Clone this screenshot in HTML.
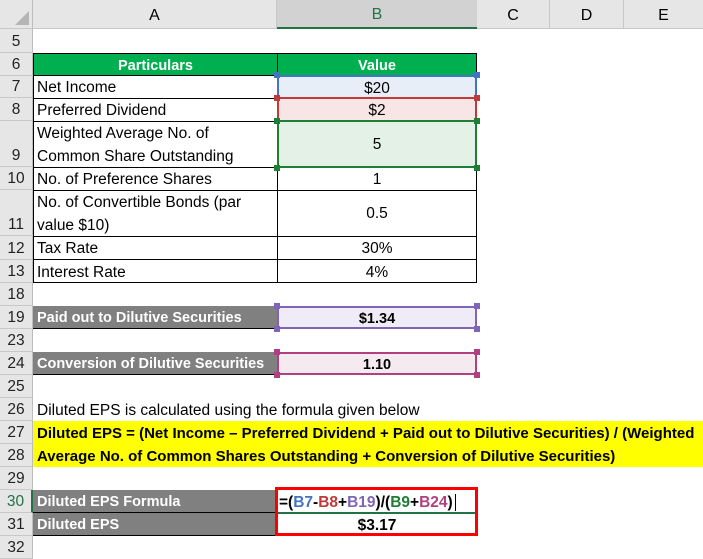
<!DOCTYPE html>
<html><head><meta charset="utf-8"><style>
*{margin:0;padding:0;box-sizing:border-box}
body{width:703px;height:556px;overflow:hidden;background:#fff;font-family:"Liberation Sans",sans-serif;font-size:15.5px;color:#000;position:relative}
.a{position:absolute}
.rh{position:absolute;left:0;width:33px;background:#e6e6e6;border-bottom:1px solid #c8c8c8;border-right:1px solid #bdbdbd;color:#222;font-size:15.5px;text-align:center;display:flex;align-items:flex-end;justify-content:center;padding-bottom:1px}
.c{position:absolute;display:flex;align-items:center;white-space:nowrap;overflow:visible;padding-top:2px}
.ctr{justify-content:center}
.b{font-weight:bold}
.g{font-size:14.5px}
.h{width:6px;height:6px;position:absolute}
</style></head><body>
<div class="a" style="left:0;top:0;width:703px;height:29px;background:#e6e6e6;border-bottom:1px solid #c8c8c8"></div>
<div class="a" style="left:0;top:0;width:33px;height:29px;border-right:1px solid #bdbdbd"></div>
<svg class="a" style="left:14px;top:10px" width="16" height="16"><polygon points="15,1 15,15 1,15" fill="#b5b5b5"/></svg>
<div class="c ctr" style="left:33px;top:0;width:244px;height:29px;border-right:1px solid #c8c8c8;font-size:16px">A</div>
<div class="c ctr" style="left:277px;top:0;width:200px;height:29px;background:#d2d2d2;border-bottom:2px solid #217346;color:#217346;font-size:16px">B</div>
<div class="c ctr" style="left:477px;top:0;width:73px;height:29px;border-right:1px solid #c8c8c8;font-size:16px">C</div>
<div class="c ctr" style="left:550px;top:0;width:74px;height:29px;border-right:1px solid #c8c8c8;font-size:16px">D</div>
<div class="c ctr" style="left:624px;top:0;width:79px;height:29px;font-size:16px">E</div>

<div class="rh" style="top:29px;height:24px">5</div>
<div class="rh" style="top:53px;height:23px">6</div>
<div class="rh" style="top:76px;height:22px">7</div>
<div class="rh" style="top:98px;height:23px">8</div>
<div class="rh" style="top:121px;height:46px">9</div>
<div class="rh" style="top:167px;height:23px">10</div>
<div class="rh" style="top:190px;height:46px">11</div>
<div class="rh" style="top:236px;height:24px">12</div>
<div class="rh" style="top:260px;height:23px">13</div>
<div class="rh" style="top:283px;height:23px">18</div>
<div class="rh" style="top:306px;height:23px">19</div>
<div class="rh" style="top:329px;height:23px">23</div>
<div class="rh" style="top:352px;height:23px">24</div>
<div class="rh" style="top:375px;height:23px">25</div>
<div class="rh" style="top:398px;height:23px">26</div>
<div class="rh" style="top:421px;height:23px">27</div>
<div class="rh" style="top:444px;height:23px">28</div>
<div class="rh" style="top:467px;height:23px">29</div>
<div class="rh" style="top:490px;height:23px;color:#217346;border-right:2px solid #217346">30</div>
<div class="rh" style="top:513px;height:23px">31</div>
<div class="rh" style="top:536px;height:23px">32</div>

<div class="c ctr b g" style="left:33px;top:53px;width:244px;height:23px;background:#00b050;color:#fff;border:1px solid #000;border-right:none">Particulars</div>
<div class="c ctr b g" style="left:277px;top:53px;width:200px;height:23px;background:#00b050;color:#fff;border:1px solid #000">Value</div>

<div class="a" style="left:33px;top:75px;width:444px;height:208px;border:1px solid #000;border-top:none"></div>
<div class="a" style="left:277px;top:75px;width:1px;height:208px;background:#000"></div>
<div class="a" style="left:33px;top:98px;width:244px;height:1px;background:#000"></div>
<div class="a" style="left:33px;top:121px;width:244px;height:1px;background:#000"></div>
<div class="a" style="left:33px;top:167px;width:444px;height:1px;background:#000"></div>
<div class="a" style="left:33px;top:190px;width:444px;height:1px;background:#000"></div>
<div class="a" style="left:33px;top:236px;width:444px;height:1px;background:#000"></div>
<div class="a" style="left:33px;top:259px;width:444px;height:1px;background:#000"></div>

<div class="c" style="left:37px;top:76px;height:22px">Net Income</div>
<div class="c" style="left:37px;top:98px;height:23px">Preferred Dividend</div>
<div class="c" style="left:37px;top:121px;height:23px">Weighted Average No. of</div>
<div class="c" style="left:37px;top:144px;height:23px">Common Share Outstanding</div>
<div class="c" style="left:37px;top:167px;height:23px">No. of Preference Shares</div>
<div class="c" style="left:37px;top:190px;height:23px">No. of Convertible Bonds (par</div>
<div class="c" style="left:37px;top:213px;height:23px">value $10)</div>
<div class="c" style="left:37px;top:236px;height:24px">Tax Rate</div>
<div class="c" style="left:37px;top:260px;height:23px">Interest Rate</div>

<div class="c ctr" style="left:277px;top:75px;width:200px;height:23px;background:#e8eef8;border:2px solid #4472c4;border-bottom:none">$20</div>
<div class="c ctr" style="left:277px;top:97px;width:200px;height:24px;background:#f8e6e6;border:2px solid #c0393b;border-bottom:none">$2</div>
<div class="c ctr" style="left:277px;top:120px;width:200px;height:48px;background:#e4f1e6;border:2px solid #1e7e34">5</div>
<div class="c ctr" style="left:277px;top:167px;width:200px;height:23px">1</div>
<div class="c ctr" style="left:277px;top:190px;width:200px;height:46px">0.5</div>
<div class="c ctr" style="left:277px;top:236px;width:200px;height:24px">30%</div>
<div class="c ctr" style="left:277px;top:260px;width:200px;height:23px">4%</div>
<div class="h" style="left:274px;top:72px;background:#4472c4"></div><div class="h" style="left:474px;top:72px;background:#4472c4"></div>
<div class="h" style="left:274px;top:95px;background:#c0393b"></div><div class="h" style="left:474px;top:95px;background:#c0393b"></div>
<div class="h" style="left:274px;top:118px;background:#1e7e34"></div><div class="h" style="left:474px;top:118px;background:#1e7e34"></div>
<div class="h" style="left:274px;top:165px;background:#1e7e34"></div><div class="h" style="left:474px;top:165px;background:#1e7e34"></div>

<div class="c b g" style="left:33px;top:306px;width:244px;height:23px;background:#808080;color:#fff;padding-left:4px;border-bottom:1px solid #000">Paid out to Dilutive Securities</div>
<div class="c ctr b g" style="left:277px;top:306px;width:200px;height:23px;background:#efecf8;border:2px solid #8064b8">$1.34</div>
<div class="h" style="left:274px;top:303px;background:#8064b8"></div><div class="h" style="left:474px;top:303px;background:#8064b8"></div>
<div class="h" style="left:274px;top:326px;background:#8064b8"></div><div class="h" style="left:474px;top:326px;background:#8064b8"></div>

<div class="c b g" style="left:33px;top:352px;width:244px;height:23px;background:#808080;color:#fff;padding-left:4px;border-bottom:1px solid #000">Conversion of Dilutive Securities</div>
<div class="c ctr b g" style="left:277px;top:352px;width:200px;height:23px;background:#f6eaf1;border:2px solid #b04080">1.10</div>
<div class="h" style="left:274px;top:349px;background:#b04080"></div><div class="h" style="left:474px;top:349px;background:#b04080"></div>
<div class="h" style="left:274px;top:372px;background:#b04080"></div><div class="h" style="left:474px;top:372px;background:#b04080"></div>

<div class="c" style="left:37px;top:398px;height:23px">Diluted EPS is calculated using the formula given below</div>
<div class="a" style="left:33px;top:421px;width:670px;height:46px;background:#ffff00"></div>
<div class="c b" style="left:37px;top:421px;height:23px;font-size:15px">Diluted EPS = (Net Income – Preferred Dividend + Paid out to Dilutive Securities) / (Weighted</div>
<div class="c b" style="left:37px;top:444px;height:23px;font-size:15px">Average No. of Common Shares Outstanding + Conversion of Dilutive Securities)</div>

<div class="c b g" style="left:33px;top:490px;width:244px;height:23px;background:#808080;color:#fff;padding-left:4px;border-bottom:1px solid #000">Diluted EPS Formula</div>
<div class="c b g" style="left:33px;top:513px;width:244px;height:23px;background:#808080;color:#fff;padding-left:4px;border-bottom:1px solid #000">Diluted EPS</div>
<div class="c b" style="left:279px;top:490px;height:23px">=(<span style="color:#4472c4">B7</span>-<span style="color:#c0393b">B8</span>+<span style="color:#8064b8">B19</span>)/(<span style="color:#1e7e34">B9</span>+<span style="color:#b04080">B24</span>)<span style="display:inline-block;width:1px;height:17px;background:#000;margin-left:2px"></span></div>
<div class="a" style="left:277px;top:512px;width:200px;height:2px;background:#217346"></div>
<div class="c ctr b" style="left:277px;top:513px;width:200px;height:23px">$3.17</div>
<div class="a" style="left:275px;top:487px;width:203px;height:49px;border:3px solid #ff0000"></div>
</body></html>
